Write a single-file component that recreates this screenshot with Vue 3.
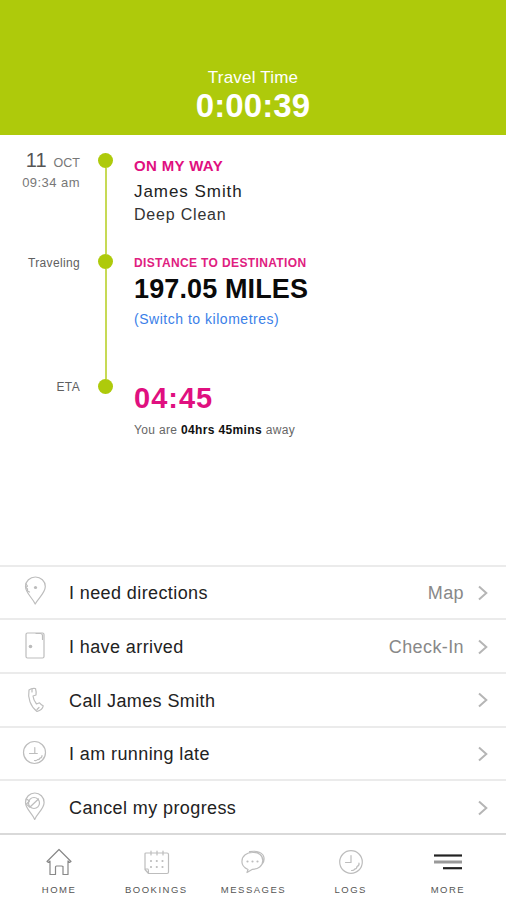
<script setup>
const actions = [
  { icon: 'pin', label: 'I need directions', hint: 'Map' },
  { icon: 'door', label: 'I have arrived', hint: 'Check-In' },
  { icon: 'phone', label: 'Call James Smith' },
  { icon: 'clock', label: 'I am running late' },
  { icon: 'cancel', label: 'Cancel my progress' },
]
const tabs = [
  { icon: 'home', label: 'HOME' },
  { icon: 'calendar', label: 'BOOKINGS' },
  { icon: 'chat', label: 'MESSAGES' },
  { icon: 'clock', label: 'LOGS' },
  { icon: 'more', label: 'MORE' },
]
</script>

<template>
  <main class="screen">
    <header class="header">
      <div class="header-label">Travel Time</div>
      <div class="header-time">0:00:39</div>
    </header>

    <section class="timeline">
      <div class="step first">
        <div class="when">
          <div class="date"><span class="day">11</span><span class="month">OCT</span></div>
          <div class="time">09:34 am</div>
        </div>
        <div class="rail"><i class="dot"></i><i class="line"></i></div>
        <div class="info">
          <div class="status">ON MY WAY</div>
          <div class="person">James Smith</div>
          <div class="service">Deep Clean</div>
        </div>
      </div>
      <div class="step second">
        <div class="when small">Traveling</div>
        <div class="rail"><i class="dot"></i><i class="line"></i></div>
        <div class="info">
          <div class="distance-label">DISTANCE TO DESTINATION</div>
          <div class="distance">197.05 MILES</div>
          <a class="switch">(Switch to kilometres)</a>
        </div>
      </div>
      <div class="step third">
        <div class="when small">ETA</div>
        <div class="rail"><i class="dot"></i></div>
        <div class="info">
          <div class="eta">04:45</div>
          <div class="away">You are <b>04hrs 45mins</b> away</div>
        </div>
      </div>
    </section>

    <nav class="actions">
      <div v-for="a in actions" :key="a.label" class="action">
        <svg class="action-icon" viewBox="0 0 28 32">
          <template v-if="a.icon === 'pin'">
            <path d="M15.200 29C13 23.500 5.500 18 5.500 11.500a9.900 9.500 0 0 1 19.800 0C25.300 18 18 23.500 15.200 29Z" />
            <path d="M6 9l1.500 2-1.500 1.500 1.500 1.500 0 2 2 1" />
            <circle class="fill" cx="15.500" cy="12.500" r="1.600" />
          </template>
          <template v-else-if="a.icon === 'door'">
            <rect x="6" y="4" width="18" height="25" rx="1.500" />
            <path d="M16 4.500h4.500q2 .3 2 2v4" />
            <circle class="fill" cx="10.500" cy="17.500" r="1.800" />
          </template>
          <template v-else-if="a.icon === 'phone'">
            <path d="M9 7q2.500-2 6.500-1.500 1 3.500.5 6.500l-3 1q.5 4.500 3.500 8l3-1.200q2 2.200 3.700 3-.7 4-6.200 5.700C10.500 23.500 7.500 15 9 7Z" />
            <path d="M12 6v3M17 26.500l2-2" />
          </template>
          <template v-else-if="a.icon === 'clock'">
            <circle cx="14.500" cy="16.500" r="11" />
            <path d="M14.800 11.500v6H9.500M14.800 17.500h2.500M14.500 24.500q2 .5 3-1 2 .5 2.500-1.500 2 0 2-2.500" />
          </template>
          <template v-else>
            <path d="M14.700 29.500C12.500 23.500 5.500 19 5.500 12.500a9.300 9.500 0 0 1 18.600 0C24.100 19 17 23.500 14.700 29.500Z" />
            <circle cx="14" cy="13" r="5.500" />
            <path d="M10 17L18.500 9M6.500 9l3 2-3 3 3 3" />
          </template>
        </svg>
        <span class="action-label">{{ a.label }}</span>
        <span v-if="a.hint" class="hint">{{ a.hint }}</span>
        <svg class="chevron" viewBox="0 0 10 16"><path d="M1 1.500L8.300 8 1 14.500" /></svg>
      </div>
    </nav>

    <footer class="tabs">
      <div v-for="t in tabs" :key="t.label" class="tab" :class="t.icon">
        <svg class="tab-icon" viewBox="0 0 30 30">
          <template v-if="t.icon === 'home'">
            <path d="M3 14.500L15 2.500 27 14.500 25.500 15.500 24 14V27.500H19V19.500Q18.500 19 17.500 19H12.500Q11.500 19 11.500 20V27.500H6V14L4.500 15.500Z" />
          </template>
          <template v-else-if="t.icon === 'calendar'">
            <path d="M4 6.500Q4 6 5 6H26Q27.500 6 27.500 7.500V25Q27.500 26.500 26 26.500H7.500L4 22.500ZM4 22H7Q7.500 22 7.500 26M10 4V8M16 4V8M22 4V8" />
            <path class="dots" d="M10 14h0M15.800 14h0M21.500 14h0M10 20h0M15.800 20h0M21.500 20h0" />
          </template>
          <template v-else-if="t.icon === 'chat'">
            <path d="M9 25.500L10 22.500C6 20.500 3.500 18 4 14 4 8.500 9 5.500 14.500 5.500 21 5 24.800 8.500 24.800 13.500 24.800 19 20 22.300 14.500 22.300ZM11.500 4.700Q21 3 25 8 27.500 12.500 24.300 17" />
            <path class="dots" d="M9.500 14.500h0M14.500 14.500h0M19.500 14.500h0" />
          </template>
          <template v-else-if="t.icon === 'clock'">
            <circle cx="16" cy="15" r="11.300" />
            <path d="M16 8.500V15.500H10.500M16.500 23.500Q19.500 23.500 19.500 22 22 22 22 19.500 24.500 18.500 24 16" />
          </template>
          <template v-else>
            <path class="bar" d="M2 8.500H30" />
            <path class="bar grey" d="M2 15H30" />
            <path class="bar" d="M11 21.200H30" />
          </template>
        </svg>
        <span class="tab-label">{{ t.label }}</span>
      </div>
    </footer>
  </main>
</template>

<style>
body { background: #fff; }
</style>

<style scoped>
.screen {
  width: 506px;
  height: 900px;
  display: flex;
  flex-direction: column;
  overflow: hidden;
  background: #fff;
  font-family: "Liberation Sans", Arial, sans-serif;
  white-space: nowrap;
}
.header {
  height: 134.500px;
  box-sizing: border-box;
  padding-top: 68px;
  background: #aeca0b;
  color: #fff;
  text-align: center;
  flex: none;
}
.header-label { font-size: 17px; line-height: 20px; letter-spacing: 0.200px; }
.header-time { font-size: 33px; line-height: 35px; font-weight: 700; letter-spacing: 0.100px; }

.timeline { flex: 1; padding-top: 18.500px; }
.step { display: grid; grid-template-columns: 80px 51px 1fr; }
.first { height: 100.500px; }
.second { height: 125px; }
.when { text-align: right; color: #777; }
.date { line-height: 14px; height: 20px; display: flex; justify-content: flex-end; align-items: baseline; }
.day { font-size: 20px; color: #555; }
.month { font-size: 12.500px; margin-left: 7px; }
.time { font-size: 13px; line-height: 20px; letter-spacing: 0.450px; }
.small { font-size: 12px; line-height: 19px; letter-spacing: 0.350px; color: #606060; }
.third .small { line-height: 17px; }
.rail { display: flex; flex-direction: column; align-items: center; }
.dot { width: 15px; height: 15px; border-radius: 50%; background: #aeca0b; flex: none; }
.line { flex: 1; width: 2px; background: #c7da55; }
.info { padding-left: 3px; }
.status { margin-top: 3px; font-size: 15px; line-height: 20px; font-weight: 700; color: #e0107f; letter-spacing: 0.350px; }
.person { margin-top: 4px; font-size: 17px; line-height: 24px; letter-spacing: 0.950px; color: #222; }
.service { font-size: 16px; line-height: 22px; letter-spacing: 0.800px; color: #333; }
.distance-label { margin-top: 2px; font-size: 12px; line-height: 14px; font-weight: 700; color: #e0207f; letter-spacing: 0.370px; }
.distance { margin-top: 3px; font-size: 27px; line-height: 32px; font-weight: 700; color: #0a0a0a; letter-spacing: 0.120px; }
.switch { display: block; margin-top: 5px; font-size: 14px; line-height: 18px; letter-spacing: 0.520px; color: #3a80e8; }
.eta { margin-top: 3px; font-size: 29px; line-height: 32px; font-weight: 700; color: #e0107f; letter-spacing: 1px; }
.away { margin-top: 8px; font-size: 12px; line-height: 16px; color: #666; letter-spacing: 0.350px; }
.away b { color: #111; }

.actions { flex: none; height: 268.500px; display: grid; grid-template-rows: repeat(5, 1fr); }
.action {
  display: flex;
  align-items: center;
  border-top: 2px solid #ebebeb;
  padding: 0 18px 0 20px;
}
.action-icon { width: 28px; height: 32px; margin: 0 21px 2px 0; flex: none; }
.action-icon, .tab-icon { fill: none; stroke: #bdbdbd; stroke-width: 1.200; stroke-linejoin: round; stroke-linecap: round; }
.fill { fill: #bbb; stroke: none; }
.action-label { flex: 1; margin-top: 2px; font-size: 18px; line-height: 22px; letter-spacing: 0.400px; color: #222; }
.hint { margin-top: 2px; font-size: 18px; line-height: 22px; letter-spacing: 0.400px; color: #888; margin-right: 14px; }
.chevron { width: 10px; height: 16px; margin-top: 1px; fill: none; stroke: #b5b5b5; stroke-width: 2; flex: none; }

.tabs {
  flex: none;
  height: 67px;
  box-sizing: border-box;
  border-top: 2px solid #d9d9d9;
  padding: 12px 10px 0;
  display: grid;
  grid-template-columns: repeat(5, 1fr);
}
.tab { display: flex; flex-direction: column; align-items: center; }
.tab-icon { width: 30px; height: 30px; }
.home .tab-icon { stroke: #888; }
.tab-label { margin-top: 7px; font-size: 9.500px; line-height: 12px; letter-spacing: 1.500px; color: #555; padding-left: 1px; }
.dots { stroke-width: 2.200; }
.bar { stroke: #222; stroke-width: 2.200; stroke-linecap: butt; }
.grey { stroke: #999; stroke-width: 3; }
</style>
